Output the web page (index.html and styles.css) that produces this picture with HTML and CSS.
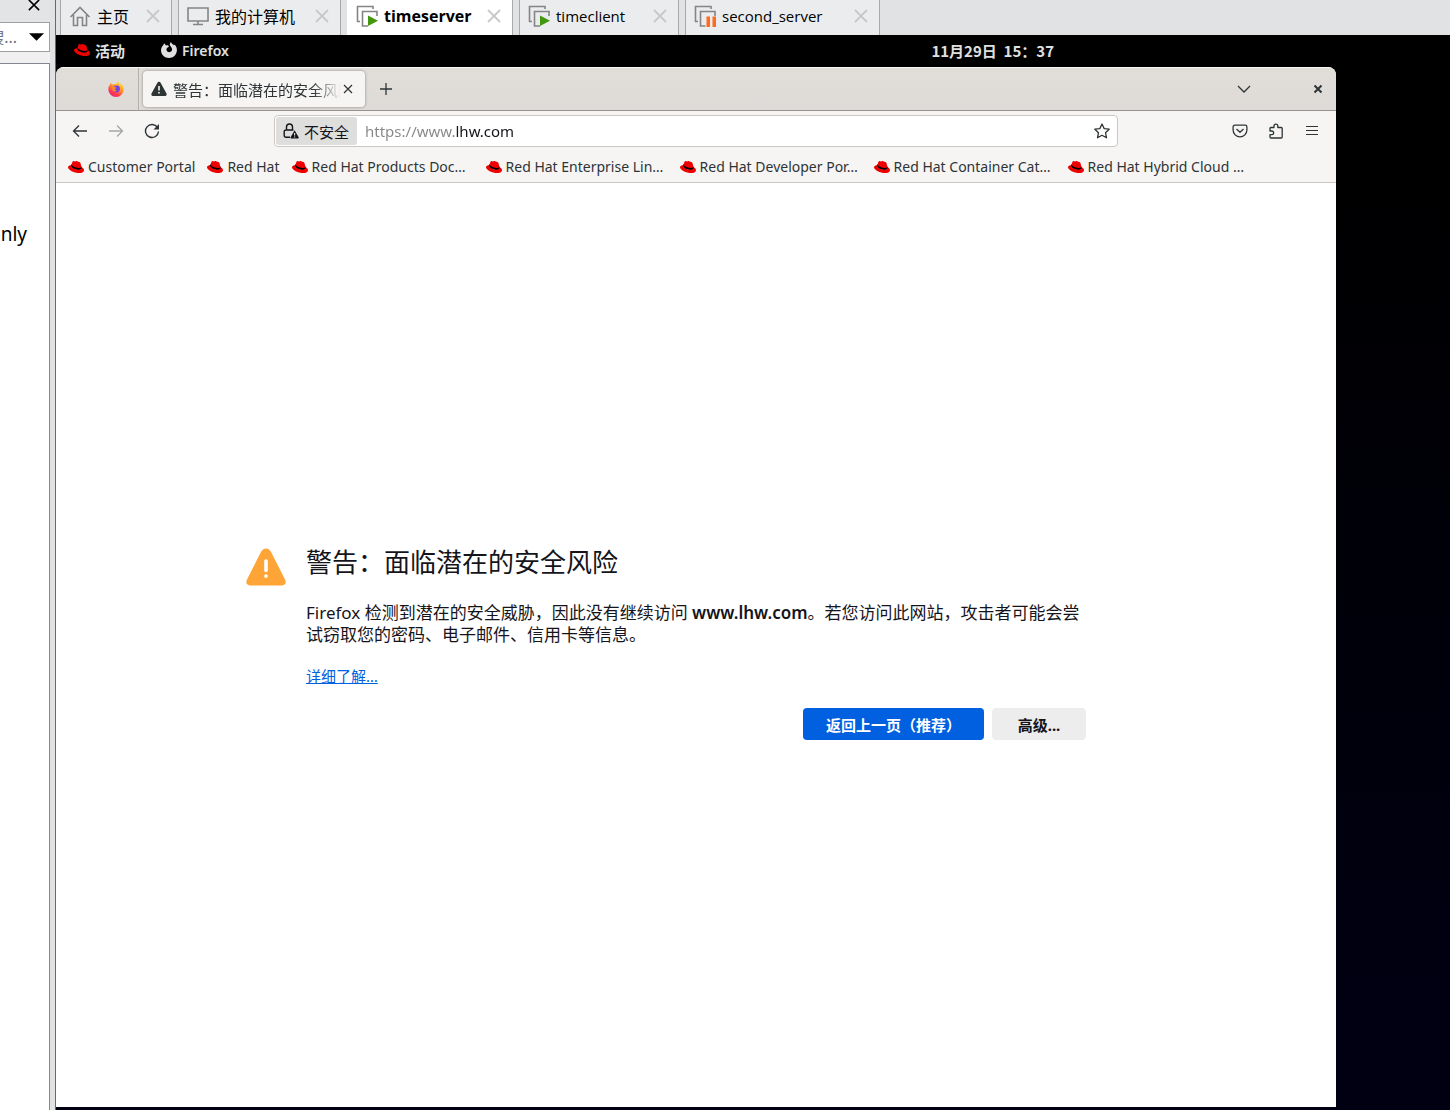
FILE: index.html
```html
<!DOCTYPE html>
<html lang="zh-CN">

<head>
    <meta charset="UTF-8">
    <meta name="viewport" content="width=device-width, initial-scale=1.0">
    <title>timeserver</title>
    <link rel="stylesheet" href="styles.css">
</head>

<body>
    <!-- shared icons -->
    <svg class="defs" aria-hidden="true">
        <symbol id="hat" viewBox="0 0 24 24">
            <path fill="#000" d="M5 8 L20 11 L21.500 15 L16 17 L8 15 L4 11 Z" />
            <path fill="#e00" d="M16.009 13.386c1.577 0 3.86-.326 3.86-2.202a1.765 1.765 0 0 0-.04-.431l-.94-4.08c-.216-.898-.406-1.305-1.982-2.093-1.223-.625-3.888-1.658-4.676-1.658-.733 0-.947.946-1.822.946-.842 0-1.467-.706-2.255-.706-.757 0-1.25.515-1.63 1.576 0 0-1.06 2.99-1.197 3.424a.81.81 0 0 0-.028.245c0 1.162 4.577 4.974 10.71 4.974m4.101-1.435c.218 1.032.218 1.14.218 1.277 0 1.765-1.984 2.745-4.593 2.745-5.895.004-11.06-3.451-11.06-5.734a2.326 2.326 0 0 1 .19-.925C2.746 9.415 0 9.794 0 12.217c0 3.969 9.405 8.861 16.851 8.861 5.71 0 7.149-2.582 7.149-4.62 0-1.605-1.387-3.425-3.887-4.512" />
        </symbol>
        <symbol id="cross" viewBox="0 0 14 14">
            <path d="M1 1L13 13M13 1L1 13" fill="none" stroke="currentColor" stroke-width="1.8" />
        </symbol>
        <symbol id="vm" viewBox="0 0 22 22">
            <path d="M1.500 17V1.500H17V4M1 16.500H4" fill="none" stroke="#858585" stroke-width="1.600" />
            <path d="M12 21H6.500V6.500H21V11" fill="none" stroke="#858585" stroke-width="1.600" />
        </symbol>
        <symbol id="warn" viewBox="0 0 16 16">
            <path fill="currentColor" d="M15.500 12.600L9.700 1.900a1.900 1.900 0 0 0-3.400 0L.5 12.600A1.600 1.600 0 0 0 2 15h12a1.600 1.600 0 0 0 1.500-2.400z" />
        </symbol>
    </svg>

    <aside class="sidebar">
        <div class="sidebar-inner">
            <div class="sidebar-head">
                <button class="sidebar-close" aria-label="关闭"><svg><use href="#cross" /></svg></button>
            </div>
            <div class="search">
                <select aria-label="搜索">
                    <option>搜...</option>
                </select>
                <svg class="arrow" viewBox="0 0 16 8"><path d="M0 0H16L8 8Z" /></svg>
            </div>
            <div class="library">
                <span>only</span>
            </div>
        </div>
    </aside>

    <div class="workspace">
        <nav class="vm-tabs">
            <div class="vm-tab home">
                <svg class="vm-icon" viewBox="0 0 22 22"><path d="M1.500 12L11 2.500L20.500 12M4.500 10V20.500H8.500V12.500H13.500V20.500H17.500V10" fill="none" stroke="#858585" stroke-width="1.600" /></svg>
                <a href="#">主页</a>
                <button aria-label="关闭 主页"><svg><use href="#cross" /></svg></button>
            </div>
            <div class="vm-tab computer">
                <svg class="vm-icon" viewBox="0 0 22 22"><path d="M1 3H21V16H1ZM11 16V19M6 19.500H16" fill="none" stroke="#858585" stroke-width="1.600" /></svg>
                <a href="#">我的计算机</a>
                <button aria-label="关闭 我的计算机"><svg><use href="#cross" /></svg></button>
            </div>
            <div class="vm-tab server active">
                <svg class="vm-icon" viewBox="0 0 22 22"><use href="#vm" /><path d="M12 10.500L22 15.800L12 21Z" fill="#43970d" /></svg>
                <a href="#">timeserver</a>
                <button aria-label="关闭 timeserver"><svg><use href="#cross" /></svg></button>
            </div>
            <div class="vm-tab client">
                <svg class="vm-icon" viewBox="0 0 22 22"><use href="#vm" /><path d="M12 10.500L22 15.800L12 21Z" fill="#43970d" /></svg>
                <a href="#">timeclient</a>
                <button aria-label="关闭 timeclient"><svg><use href="#cross" /></svg></button>
            </div>
            <div class="vm-tab second">
                <svg class="vm-icon" viewBox="0 0 22 22"><use href="#vm" /><path d="M11.500 10H16V22H11.500Z" fill="#ebecee" /><path d="M12.500 11.500H16V22H12.500ZM18.500 11.500H22V22H18.500Z" fill="#ff6b1a" /></svg>
                <a href="#">second_server</a>
                <button aria-label="关闭 second_server"><svg><use href="#cross" /></svg></button>
            </div>
        </nav>

        <div class="desktop">
            <header class="top-bar">
                <button class="activities"><svg class="icon"><use href="#hat" /></svg>活动</button>
                <button class="app-menu">
                    <svg class="icon" viewBox="0 0 16 16"><path fill="#e0e0e0" d="M3.200 1.200L5 3.500C6.500 3 7.500 3.500 8 4.500L6 6C5 7 5.300 9.300 7.200 10C9.500 10.700 11.500 9 11 6.800C10.800 5.500 9.700 4.500 9 3.500C8.500 2.500 9 1 10 0C10.300 1.800 12 2.200 13.200 3.400L13.600 2.500C15.200 4 16 6 15.900 8.500C15.600 13 12.300 16 8 16C3.500 16 .2 12.800 0 8.500C0 6.400.8 4.700 2 3.400Z" /></svg>
                    Firefox
                </button>
                <time class="clock">11月29日&nbsp; 15：37</time>
            </header>

            <div class="browser">
                <div class="tab-bar">
                    <button class="pinned" aria-label="Firefox">
                        <svg class="icon" viewBox="0 0 16 16">
                            <defs>
                                <linearGradient id="fire" x1=".8" y1="0" x2=".2" y2="1">
                                    <stop offset="0" stop-color="#fff04a" />
                                    <stop offset=".4" stop-color="#ff9a26" />
                                    <stop offset=".75" stop-color="#ff3850" />
                                    <stop offset="1" stop-color="#e91e86" />
                                </linearGradient>
                            </defs>
                            <path fill="url(#fire)" d="M2.500 2L4.600 3.600Q6 2.700 8.200 3.200Q8.500 1.200 10 0Q10.300 1.500 12 2.500L13.300 3.700L13.700 3Q15.800 5.300 15.800 8.400A7.700 7.500 0 0 1 .3 8.400Q.2 5.500 1.800 4Z" />
                            <path fill="#7542e5" d="M7.200 4.800Q11.600 3.300 12 7.800Q11.600 11.500 8 11.400Q4.500 11 4.600 7.600Q6 8.700 7.600 7.500L5.800 5.600Z" />
                            <path fill="#ff8a24" d="M3.500 6Q5.200 4.800 7 6L8.500 6.500Q8 7.500 6.800 8Q6.800 9.400 9 9.300Q7.200 11.300 5 9.900Z" />
                        </svg>
                    </button>
                    <div class="tab">
                        <svg class="icon" viewBox="0 0 16 16"><use href="#warn" /><path d="M8 5V9.500M8 11V12.600" stroke="#f6f5f4" stroke-width="1.600" /></svg>
                        <span class="tab-title">警告：面临潜在的安全风险</span>
                        <button class="tab-close" aria-label="关闭标签页"><svg viewBox="0 0 10 10"><path d="M1 1L9 9M9 1L1 9" fill="none" stroke="currentColor" stroke-width="1.200" /></svg></button>
                    </div>
                    <button class="new-tab" aria-label="新建标签页"><svg class="icon" viewBox="0 0 16 16"><path d="M8 2V14M2 8H14" stroke="currentColor" stroke-width="1.300" /></svg></button>
                    <div class="window-buttons">
                        <button aria-label="列出所有标签页"><svg class="icon" viewBox="0 0 16 16"><path d="M2 5L8 11L14 5" fill="none" stroke="currentColor" stroke-width="1.300" /></svg></button>
                        <button aria-label="关闭窗口"><svg class="icon" viewBox="0 0 16 16"><path d="M4.500 4.500L11.500 11.500M11.500 4.500L4.500 11.500" stroke="currentColor" stroke-width="2" /></svg></button>
                    </div>
                </div>

                <div class="nav-bar">
                    <div class="nav-buttons">
                        <button aria-label="后退"><svg class="icon" viewBox="0 0 16 16"><path d="M15 8H1.500M7 2.500L1.500 8L7 13.500" fill="none" stroke="currentColor" stroke-width="1.300" /></svg></button>
                        <button aria-label="前进" disabled><svg class="icon" viewBox="0 0 16 16"><path d="M1 8H14.500M9 2.500L14.500 8L9 13.500" fill="none" stroke="currentColor" stroke-width="1.300" /></svg></button>
                        <button aria-label="刷新"><svg class="icon" viewBox="0 0 16 16"><path d="M13.500 4.500A6.500 6.500 0 1 0 14.500 8.500" fill="none" stroke="currentColor" stroke-width="1.400" /><path d="M15 1V6.500H9.500Z" fill="currentColor" /></svg></button>
                    </div>
                    <div class="url-bar">
                        <button class="identity">
                            <svg class="icon" viewBox="0 0 16 16">
                                <path d="M7 14.300H3A1.800 1.800 0 0 1 1.200 12.500V8.800A1.800 1.800 0 0 1 3 7H10.500M3.500 7V4A3 3 0 0 1 9.500 4V7" fill="none" stroke="currentColor" stroke-width="1.400" />
                                <path d="M11.600 7.300L15.800 14.400Q15.900 15.500 15 15.500H8.200Q7.300 15.500 7.500 14.400Z" fill="currentColor" />
                                <path d="M11.600 10V12.600M11.600 13.400V14.500" stroke="#dededd" stroke-width="1.200" />
                            </svg>
                            不安全
                        </button>
                        <input class="url" type="text" aria-label="地址" value="https://www.lhw.com">
                        <button class="star" aria-label="为此页添加书签"><svg class="icon" viewBox="0 0 16 16"><path d="M8 1L10.200 5.600L15.200 6.200L11.500 9.700L12.500 14.800L8 12.300L3.500 14.800L4.500 9.700L.8 6.200L5.800 5.600Z" fill="none" stroke="currentColor" stroke-width="1.300" stroke-linejoin="round" /></svg></button>
                    </div>
                    <div class="nav-tools">
                        <button aria-label="Pocket"><svg class="icon" viewBox="0 0 16 16"><path d="M2.800 2.200H13.200A1.700 1.700 0 0 1 14.900 3.900V7A6.900 6.900 0 0 1 1.100 7V3.900A1.700 1.700 0 0 1 2.800 2.200ZM4.500 6L8 9.300L11.500 6" fill="none" stroke="currentColor" stroke-width="1.300" stroke-linejoin="round" /></svg></button>
                        <button aria-label="扩展"><svg class="icon" viewBox="0 0 16 16"><path d="M2 8V5.500A1 1 0 0 1 3 4.500H6V3A1.900 1.900 0 0 1 9.800 3V4.500H13.200A1 1 0 0 1 14.200 5.500V14A1 1 0 0 1 13.200 15H3A1 1 0 0 1 2 14V11.700H3.800A1.800 1.800 0 0 0 3.800 8Z" fill="none" stroke="currentColor" stroke-width="1.300" stroke-linejoin="round" /></svg></button>
                        <button aria-label="菜单"><svg class="icon" viewBox="0 0 16 16"><path d="M2 3.500H14M2 7.500H14M2 11.500H14" stroke="currentColor" stroke-width="1.200" /></svg></button>
                    </div>
                </div>

                <nav class="bookmarks">
                    <a href="#"><svg class="icon"><use href="#hat" /></svg>Customer Portal</a>
                    <a href="#"><svg class="icon"><use href="#hat" /></svg>Red Hat</a>
                    <a href="#" class="long"><svg class="icon"><use href="#hat" /></svg>Red Hat Products Doc…</a>
                    <a href="#" class="long"><svg class="icon"><use href="#hat" /></svg>Red Hat Enterprise Lin…</a>
                    <a href="#" class="long"><svg class="icon"><use href="#hat" /></svg>Red Hat Developer Por…</a>
                    <a href="#" class="long"><svg class="icon"><use href="#hat" /></svg>Red Hat Container Cat…</a>
                    <a href="#" class="long"><svg class="icon"><use href="#hat" /></svg>Red Hat Hybrid Cloud …</a>
                </nav>

                <main class="page">
                    <svg class="warning-icon" viewBox="0 0 40 40">
                        <path fill="#ffa436" d="M39 32.500L25.300 5.500Q23.300 1.500 20 1.500Q16.700 1.500 14.700 5.500L1 32.500Q-1.500 38.500 5 38.500H35Q41.500 38.500 39 32.500Z" />
                        <path d="M20 14V23.500M20 29V29.200" stroke="#fff" stroke-width="3.600" stroke-linecap="round" />
                    </svg>
                    <div class="message">
                        <h1>警告：面临潜在的安全风险</h1>
                        <p>Firefox 检测到潜在的安全威胁，因此没有继续访问 <b>www.lhw.com</b>。若您访问此网站，攻击者可能会尝试窃取您的密码、电子邮件、信用卡等信息。</p>
                        <a href="#">详细了解…</a>
                        <div class="buttons">
                            <button class="primary">返回上一页（推荐）</button>
                            <button>高级...</button>
                        </div>
                    </div>
                </main>
            </div>
        </div>
    </div>
</body>

</html>
```

FILE: styles.css
```css
* {
    margin: 0;
    padding: 0;
    box-sizing: border-box;
}

body {
    display: flex;
    height: 100vh;
    overflow: hidden;
    background: #e1e2e4;
    font-family: "Noto Sans", "Noto Sans CJK SC", sans-serif;
    font-size: 15px;
    color: #2e3436;
}

button {
    display: flex;
    align-items: center;
    border: none;
    background: none;
    color: inherit;
    font: inherit;
    cursor: pointer;
}

a {
    color: inherit;
    text-decoration: none;
}

svg {
    display: block;
    flex: none;
}

.defs {
    position: absolute;
    width: 0;
    height: 0;
}

.icon {
    width: 16px;
    height: 16px;
}

/* library panel, cut off at the left */
.sidebar {
    display: flex;
    justify-content: flex-end;
    width: 50px;
    flex: none;
    overflow: hidden;
}

.sidebar-inner {
    display: flex;
    flex-direction: column;
    flex: none;
    width: 240px;
    background: #f0f0f0;
}

.sidebar-head {
    display: flex;
    justify-content: flex-end;
    height: 22px;
    padding-right: 10px;
    background: #e3e4e6;
}

.sidebar-close {
    height: 10px;
    color: #000;
}

.sidebar-close svg {
    width: 12px;
    height: 12px;
}

.search {
    position: relative;
    margin-bottom: 11px;
}

.search select {
    width: 100%;
    height: 30px;
    padding-right: 32px;
    appearance: none;
    border: 1px solid #a0a0a0;
    border-radius: 0;
    background: #fff;
    color: #6d7487;
    font: inherit;
    font-size: 16px;
    text-align-last: right;
}

.arrow {
    position: absolute;
    top: 11px;
    right: 6px;
    width: 15px;
    height: 8px;
    pointer-events: none;
}

.library {
    flex: 1;
    padding: 157px 22px 0 0;
    border: 1px solid #828790;
    border-bottom: none;
    background: #fff;
    color: #000;
    font-size: 19px;
    text-align: right;
}

.workspace {
    display: flex;
    flex-direction: column;
    flex: 1;
    min-width: 0;
    margin-left: 5px;
    border-left: 1px solid #696969;
}

/* virtual machine tabs */
.vm-tabs {
    display: flex;
    gap: 6px;
    height: 35px;
    padding-left: 4px;
}

.vm-tab {
    display: flex;
    align-items: center;
    gap: 6px;
    padding: 0 11px 4px 8px;
    border: 1px solid #a9a9a9;
    border-width: 0 1px;
    background: #ebecee;
    color: #000;
    font-family: "Open Sans", "Noto Sans CJK SC", sans-serif;
    font-size: 16px;
}

.vm-tab.active {
    border-left-color: #fff;
    background: #fff;
    font-weight: bold;
}

.vm-tab button {
    margin-left: auto;
    color: #c8c8c8;
}

.vm-tab button svg {
    width: 14px;
    height: 14px;
}

.vm-icon {
    width: 22px;
    height: 22px;
}

.home {
    width: 112px;
}

.computer {
    width: 163px;
}

.server {
    width: 166px;
}

.client {
    width: 160px;
    font-size: 15px;
}

.second {
    width: 195px;
    font-size: 15px;
}

/* guest desktop */
.desktop {
    display: flex;
    flex-direction: column;
    flex: 1;
    padding-bottom: 3px;
    background: linear-gradient(to bottom, #000 10%, #000012 90%);
}

.top-bar {
    display: flex;
    align-items: center;
    height: 32px;
    padding: 0 0 2px 18px;
    background: #000;
    color: #e0e0e0;
    font-size: 14px;
    font-weight: 600;
}

.top-bar button {
    gap: 5px;
}

.top-bar .activities {
    font-size: 15px;
}

.app-menu {
    margin-left: 36px;
}

.clock {
    margin-left: auto;
    margin-right: 396px;
    font-family: "Noto Sans CJK SC", sans-serif;
    font-size: 15px;
}

.browser {
    display: flex;
    flex-direction: column;
    flex: 1;
    margin-right: 114px;
    overflow: hidden;
    border-radius: 8px 8px 0 0;
    background: #fff;
}

.tab-bar {
    display: flex;
    height: 44px;
    border-top: 1px solid #f8f7f6;
    border-bottom: 1px solid #989491;
    background: linear-gradient(#e1deda, #dedad7);
}

.pinned {
    justify-content: flex-end;
    width: 83px;
    padding-right: 14px;
    border-right: 1px solid #b5b0ac;
}

.tab {
    display: flex;
    align-items: center;
    width: 222px;
    margin: 3px 3px 3px 4px;
    padding: 0 12px 0 8px;
    border-radius: 4px;
    background: #f6f5f4;
    box-shadow: 0 0 3px rgba(0, 0, 0, 0.4);
}

.tab-title {
    flex: 1;
    margin-left: 6px;
    overflow: hidden;
    white-space: nowrap;
    mask-image: linear-gradient(to left, transparent, #000 28px);
}

.tab-close svg {
    width: 10px;
    height: 10px;
    margin-left: 2px;
}

.new-tab {
    padding: 0 10px;
}

.window-buttons {
    display: flex;
    gap: 58px;
    margin-left: auto;
    padding-right: 10px;
}

.nav-bar {
    display: grid;
    grid-template-columns: 218px 1fr 218px;
    align-items: center;
    height: 40px;
    background: #f6f5f4;
}

.nav-buttons,
.nav-tools {
    display: flex;
    gap: 20px;
    padding: 0 16px;
}

.nav-tools {
    justify-content: flex-end;
}

.nav-buttons button:disabled {
    opacity: 0.4;
}

.url-bar {
    display: flex;
    height: 32px;
    padding: 1px;
    border: 1px solid #cdc7c2;
    border-radius: 4px;
    background: #fff;
}

.identity {
    gap: 5px;
    padding: 0 8px 0 7px;
    border-radius: 3px;
    background: #dededd;
    color: #15141a;
}

/* the scheme and subdomain are lighter than the domain */
.url {
    flex: 1;
    min-width: 0;
    padding-left: 8px;
    border: none;
    outline: none;
    background: linear-gradient(to right, #868686 99px, #15141a 99px);
    background-clip: text;
    color: transparent;
    font: inherit;
}

.star {
    padding: 0 6px;
}

.bookmarks {
    display: flex;
    gap: 12px;
    height: 32px;
    padding: 0 12px;
    overflow: hidden;
    border-bottom: 1px solid #cdc7c2;
    background: #f6f5f4;
    font-size: 14px;
    white-space: nowrap;
}

.bookmarks a {
    display: flex;
    align-items: center;
    gap: 4px;
    flex: none;
}

.bookmarks .long {
    width: 182px;
}

/* certificate warning */
.page {
    display: grid;
    grid-template-columns: 40px minmax(0, 780px) 40px;
    column-gap: 20px;
    align-content: center;
    justify-content: center;
    flex: 1;
    padding-bottom: 4px;
    color: #15141a;
}

.warning-icon {
    width: 40px;
    height: 42px;
}

.message h1 {
    margin-bottom: 24px;
    font-size: 26px;
    font-weight: normal;
    line-height: 32px;
}

.message p {
    margin-bottom: 18px;
    font-size: 17px;
    line-height: 22px;
}

.message b {
    font-weight: 600;
}

.message a {
    color: #0060df;
    line-height: 24px;
    text-decoration: underline;
}

.buttons {
    display: flex;
    justify-content: flex-end;
    gap: 8px;
    margin-top: 20px;
}

.buttons button {
    justify-content: center;
    min-width: 94px;
    height: 32px;
    padding: 0 23px;
    border-radius: 4px;
    background: #ededed;
    font-weight: bold;
}

.buttons .primary {
    background: #0060df;
    color: #fff;
}
```
